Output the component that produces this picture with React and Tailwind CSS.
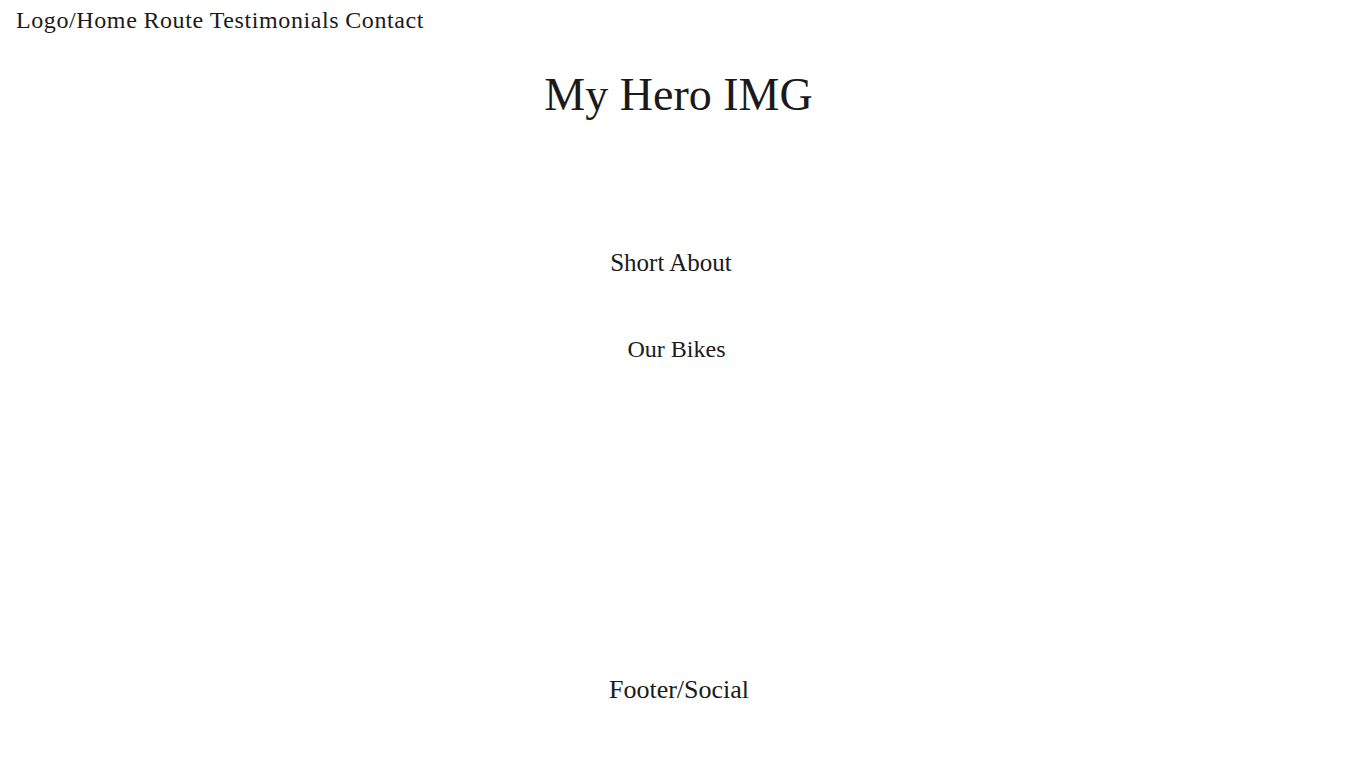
export default function App() {
  return (
    <div className="min-h-screen bg-white text-[#1a1a1a] font-['Liberation_Serif',serif]">
      <nav className="flex gap-[6px] px-4 h-10 items-center text-[24px] tracking-[0.6px]">
        <a>Logo/Home</a>
        <a>Route</a>
        <a>Testimonials</a>
        <a>Contact</a>
      </nav>

      <header className="h-[108px] flex items-center justify-center pr-[9px]">
        <h1 className="text-[46px]">My Hero IMG</h1>
      </header>

      <section className="mt-[96px] flex justify-center pr-[24px] text-[25px]">
        <h2>Short About</h2>
      </section>

      <section className="mt-[49px] flex justify-center pr-[13px] text-[24px]">
        <h2>Our Bikes</h2>
      </section>

      <footer className="mt-[303px] flex justify-center pr-[8px] text-[26px]">
        <p>Footer/Social</p>
      </footer>
    </div>
  )
}
